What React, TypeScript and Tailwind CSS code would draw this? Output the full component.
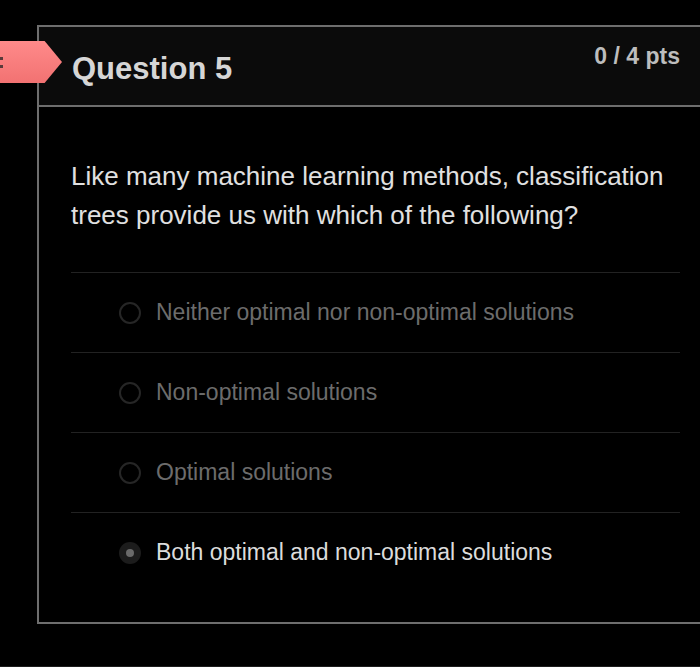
const options = [
  { label: "Neither optimal nor non-optimal solutions", selected: false },
  { label: "Non-optimal solutions", selected: false },
  { label: "Optimal solutions", selected: false },
  { label: "Both optimal and non-optimal solutions", selected: true },
];

function Radio({ selected }: { selected: boolean }) {
  if (selected) {
    return (
      <span className="flex h-[22px] w-[22px] shrink-0 items-center justify-center rounded-full bg-[#1c1c1c]">
        <span className="h-[8px] w-[8px] rounded-full bg-[#6a6a6a]" />
      </span>
    );
  }
  return <span className="h-[22px] w-[22px] shrink-0 rounded-full border-2 border-[#262626]" />;
}

export default function App() {
  return (
    <main
      className="relative h-[667px] w-[700px] overflow-hidden border-b border-[#1e1e1e] bg-black pt-[25px]"
      style={{ fontFamily: '"Liberation Sans", Arial, sans-serif' }}
    >
      {/* status flag */}
      <div className="absolute left-0 top-[41px] h-[42px] w-[62px] bg-gradient-to-b from-[#ff8a8a] to-[#f27272] [clip-path:polygon(0_0,72%_0,100%_50%,72%_100%,0_100%)]">
        <div className="mt-[16px] h-[3px] w-[3px] bg-[#5a3a3a]" />
        <div className="mt-[5px] h-[3px] w-[3px] bg-[#5a3a3a]" />
      </div>

      <section className="ml-[37px] h-[599px] w-[700px] border-b-2 border-l-2 border-t-2 border-[#6e6e6e]">
        <header className="flex h-[80px] items-start justify-between border-b-2 border-[#6e6e6e] bg-[#0b0b0b] pl-[33px] pr-[57px]">
          <h2 className="mt-[24px] text-[31px] font-bold leading-[36px] text-[#d6d6d6]">Question 5</h2>
          <span className="mt-[16px] text-[23px] font-bold leading-[26px] text-[#bdbdbd]">0 / 4 pts</span>
        </header>

        <div className="pl-[32px] pr-[57px] pt-[50px]">
          <p className="text-[26px] leading-[39px] text-[#e0e0e0]">
            Like many machine learning methods, classification trees provide us with which of the following?
          </p>

          <div className="mt-[37px]">
            {options.map((o) => (
              <div key={o.label} className="flex h-[80px] items-center gap-[15px] border-t border-[#222] pl-[48px]">
                <Radio selected={o.selected} />
                <span className={`text-[23px] ${o.selected ? "text-[#dcdcdc]" : "text-[#6c6c6c]"}`}>{o.label}</span>
              </div>
            ))}
          </div>
        </div>
      </section>
    </main>
  );
}
